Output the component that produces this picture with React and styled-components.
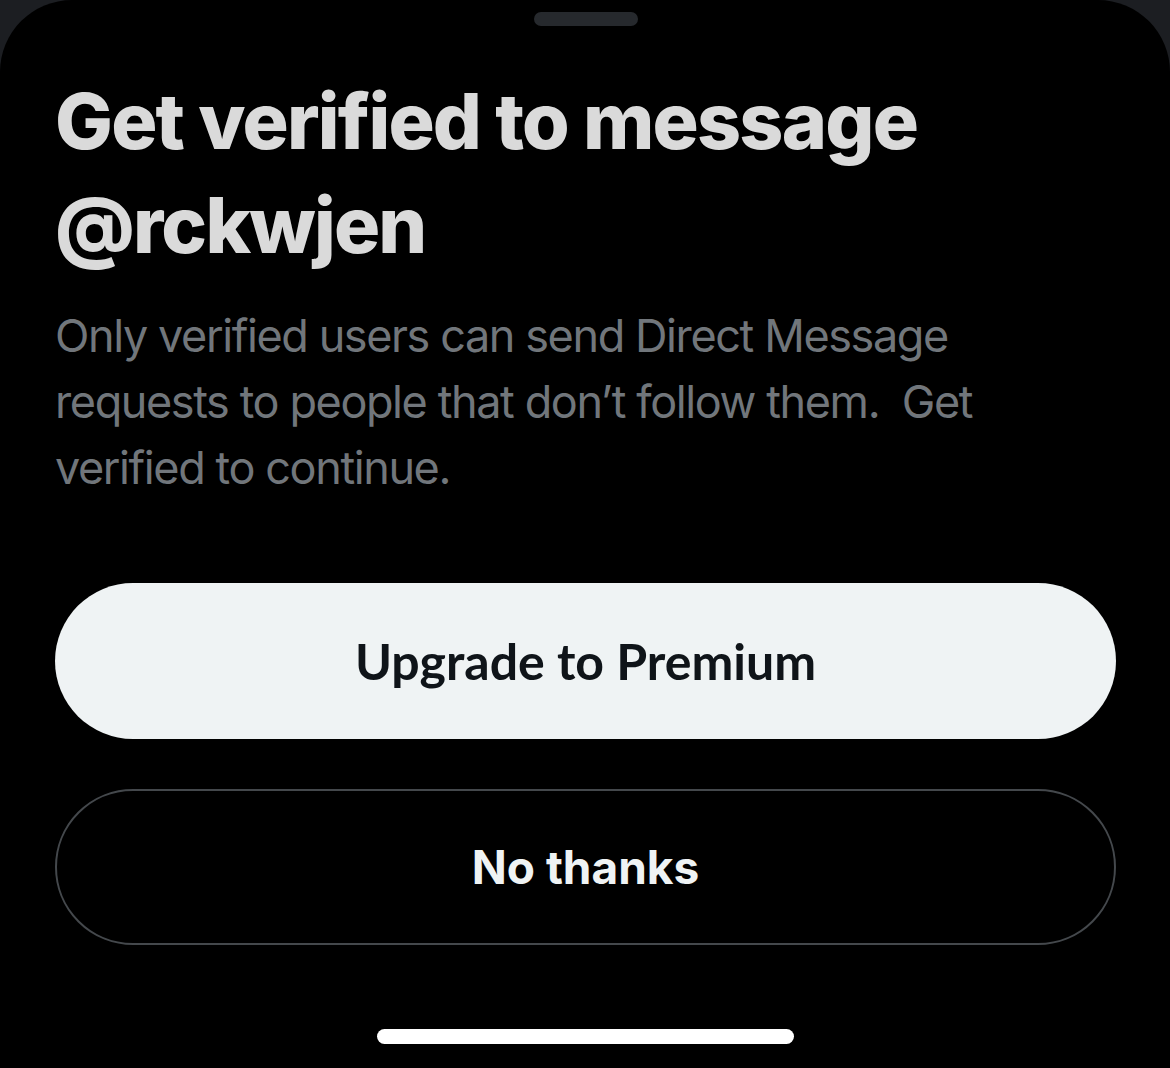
import styled, { createGlobalStyle } from "styled-components";

const Global = createGlobalStyle`
    html, body {
        margin: 0;
        padding: 0;
        background: #1c1e22;
    }
    #root {
        min-height: 1068px;
    }
`;

const Sheet = styled.div`
    box-sizing: border-box;
    height: 1068px;
    background: #000;
    border-radius: 72px 72px 0 0;
    display: flex;
    flex-direction: column;
    align-items: center;
    padding: 12px 54px 0 55px;
    font-family: Inter, "Noto Sans", sans-serif;
`;

const Grabber = styled.div`
    width: 104px;
    height: 14px;
    border-radius: 7px;
    background: #26292d;
`;

const Content = styled.div`
    align-self: stretch;
    display: flex;
    flex-direction: column;
`;

const Title = styled.h1`
    margin: 43px 0 0;
    font-size: 77px;
    line-height: 104px;
    font-weight: 800;
    letter-spacing: -1.8px;
    color: #dadada;
`;

const Body = styled.p`
    margin: 26px 0 0;
    font-size: 45px;
    line-height: 66px;
    font-weight: 400;
    letter-spacing: -1.4px;
    color: #71767b;
    white-space: pre-wrap;
`;

const Buttons = styled.div`
    display: flex;
    flex-direction: column;
    gap: 50px;
    margin-top: 82px;
`;

const Button = styled.button`
    box-sizing: border-box;
    height: 156px;
    border-radius: 78px;
    display: flex;
    align-items: center;
    justify-content: center;
    font-weight: 700;
    cursor: pointer;
    font-family: ${(p) => (p.primary ? `Lato, "Noto Sans", sans-serif` : `Inter, "Noto Sans", sans-serif`)};
    font-size: ${(p) => (p.primary ? "50px" : "46px")};
    background: ${(p) => (p.primary ? "#eff3f4" : "#000")};
    color: ${(p) => (p.primary ? "#0f1419" : "#eff3f4")};
    border: ${(p) => (p.primary ? "none" : "2px solid #44484c")};
`;

const Spacer = styled.div`
    flex: 1;
`;

const HomeBar = styled.div`
    width: 417px;
    height: 15px;
    border-radius: 8px;
    background: #fff;
    margin-bottom: 24px;
`;

export default function App() {
    return (
        <>
            <Global />
            <Sheet>
                <Grabber />
                <Content>
                    <Title>
                        Get verified to message
                        <br />
                        @rckwjen
                    </Title>
                    <Body>
                        Only verified users can send Direct Message
                        <br />
                        {"requests to people that don\u2019t follow them.  Get"}
                        <br />
                        verified to continue.
                    </Body>
                    <Buttons>
                        <Button primary>Upgrade to Premium</Button>
                        <Button>No thanks</Button>
                    </Buttons>
                </Content>
                <Spacer />
                <HomeBar />
            </Sheet>
        </>
    );
}
